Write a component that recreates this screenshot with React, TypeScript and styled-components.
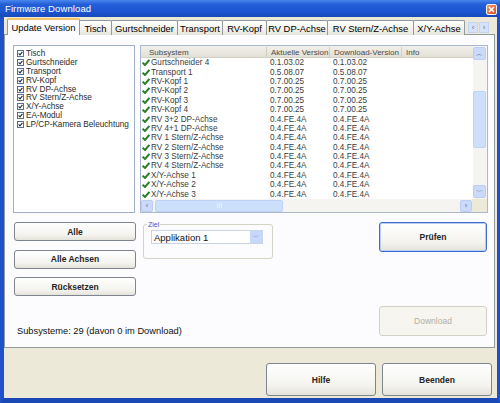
import React from "react";
import styled, { createGlobalStyle } from "styled-components";

const GlobalStyle = createGlobalStyle`
  html, body { margin: 0; padding: 0; background: #ffffff; }
  body { font-family: "Liberation Sans", Arial, sans-serif; }
  * { box-sizing: border-box; }
`;

const tabs = [
  { label: "Update Version", width: 73 },
  { label: "Tisch", width: 33 },
  { label: "Gurtschneider", width: 67 },
  { label: "Transport", width: 46 },
  { label: "RV-Kopf", width: 45 },
  { label: "RV DP-Achse", width: 62 },
  { label: "RV Stern/Z-Achse", width: 87 },
  { label: "X/Y-Achse", width: 52 },
];

const subsystems = [
  "Tisch",
  "Gurtschneider",
  "Transport",
  "RV-Kopf",
  "RV DP-Achse",
  "RV Stern/Z-Achse",
  "X/Y-Achse",
  "EA-Modul",
  "LP/CP-Kamera Beleuchtung",
];

const rows = [
  ["Gurtschneider 4", "0.1.03.02", "0.1.03.02"],
  ["Transport 1", "0.5.08.07", "0.5.08.07"],
  ["RV-Kopf 1", "0.7.00.25", "0.7.00.25"],
  ["RV-Kopf 2", "0.7.00.25", "0.7.00.25"],
  ["RV-Kopf 3", "0.7.00.25", "0.7.00.25"],
  ["RV-Kopf 4", "0.7.00.25", "0.7.00.25"],
  ["RV 3+2 DP-Achse", "0.4.FE.4A", "0.4.FE.4A"],
  ["RV 4+1 DP-Achse", "0.4.FE.4A", "0.4.FE.4A"],
  ["RV 1 Stern/Z-Achse", "0.4.FE.4A", "0.4.FE.4A"],
  ["RV 2 Stern/Z-Achse", "0.4.FE.4A", "0.4.FE.4A"],
  ["RV 3 Stern/Z-Achse", "0.4.FE.4A", "0.4.FE.4A"],
  ["RV 4 Stern/Z-Achse", "0.4.FE.4A", "0.4.FE.4A"],
  ["X/Y-Achse 1", "0.4.FE.4A", "0.4.FE.4A"],
  ["X/Y-Achse 2", "0.4.FE.4A", "0.4.FE.4A"],
  ["X/Y-Achse 3", "0.4.FE.4A", "0.4.FE.4A"],
];

const Window = styled.div`
  width: 500px;
  height: 403px;
  display: flex;
  flex-direction: column;
  overflow: hidden;
`;

const TitleBar = styled.div`
  height: 17px;
  flex: none;
  display: flex;
  align-items: center;
  justify-content: space-between;
  padding: 0 3px 0 5px;
  background: linear-gradient(#4a86ee 0%, #2360d8 25%, #1b55d0 70%, #1849b8 100%);
`;

const Title = styled.span`
  color: #ffffff;
  font-size: 9.5px;
  letter-spacing: 0.1px;
`;

const CloseButton = styled.div`
  width: 11px;
  height: 11px;
  margin-top: 2px;
  border: 1px solid #f4f4f4;
  border-radius: 2px;
  background: linear-gradient(135deg, #f09a6e, #dc4a1e);
  display: flex;
  align-items: center;
  justify-content: center;
`;

const Frame = styled.div`
  flex: 1;
  display: flex;
  flex-direction: column;
  background: #ece9d8;
  border-left: 4px solid #1f52c9;
  border-right: 3px solid #1f52c9;
  border-bottom: 5px solid #1a48b4;
  padding-top: 1px;
`;

const TabStrip = styled.div`
  height: 17px;
  display: flex;
  align-items: flex-end;
  padding-left: 3px;
  margin-bottom: -1px;
`;

const Tab = styled.div<{ $w: number; $active?: boolean }>`
  width: ${(p) => p.$w}px;
  height: ${(p) => (p.$active ? 17 : 15)}px;
  display: flex;
  align-items: center;
  justify-content: center;
  font-size: 9.4px;
  color: #000000;
  white-space: nowrap;
  border: 1px solid #919b9c;
  border-bottom: none;
  border-radius: 2px 2px 0 0;
  margin-left: -1px;
  background: ${(p) =>
    p.$active ? "#fcfcfe" : "linear-gradient(#ffffff, #f0efe8 70%, #e4e3dc)"};
  border-top: ${(p) => (p.$active ? "2px solid #f2c568" : "1px solid #919b9c")};
  position: relative;
  z-index: ${(p) => (p.$active ? 1 : 0)};
  &:first-child {
    margin-left: 0;
  }
`;

const TabArrows = styled.div`
  display: flex;
  gap: 1px;
  margin-left: 3px;
  margin-bottom: 2px;
`;

const TabArrow = styled.div`
  width: 10px;
  height: 11px;
  background: #d6e2fb;
  border: 1px solid #c3d3f5;
  color: #5a6f9e;
  font-size: 8px;
  line-height: 9px;
  text-align: center;
`;

const TabPanel = styled.div`
  height: 314px;
  margin-right: 2px;
  display: flex;
  flex-direction: column;
  background: #fcfcfe;
  border: 1px solid #919b9c;
  padding: 10px 6px 11px 8px;
`;

const TopRow = styled.div`
  height: 168px;
  display: flex;
  gap: 5px;
`;

const ListBox = styled.div`
  width: 122px;
  border: 1px solid #9fb0c8;
  background: #ffffff;
  padding: 3px 0 0 3px;
`;

const ListItem = styled.div`
  height: 8.9px;
  display: flex;
  align-items: center;
  gap: 2px;
  font-size: 8.2px;
  color: #2a2a2a;
  white-space: nowrap;
`;

const Grid = styled.div`
  flex: 1;
  display: flex;
  flex-direction: column;
  border: 1px solid #a9b8cc;
  background: #ffffff;
`;

const GridMain = styled.div`
  flex: 1;
  min-height: 0;
  display: flex;
`;

const GridBody = styled.div`
  flex: 1;
  overflow: hidden;
`;

const cols = "125px 63px 72px 1fr";

const HeaderRow = styled.div`
  height: 12px;
  display: grid;
  grid-template-columns: ${cols};
  background: linear-gradient(#f1f0ea, #e2e0d6);
  border-bottom: 1px solid #d5d2c5;
`;

const HeaderCell = styled.div<{ $first?: boolean }>`
  font-size: 8px;
  color: #4a4a4a;
  line-height: 11px;
  padding-left: ${(p) => (p.$first ? 8 : 4)}px;
  border-left: ${(p) => (p.$first ? "none" : "1px solid #d2cfc0")};
  margin: 1px 0;
  white-space: nowrap;
`;

const Row = styled.div`
  height: 9.4px;
  display: grid;
  grid-template-columns: ${cols};
  align-items: center;
  font-size: 8.2px;
  color: #3c3c3c;
  white-space: nowrap;
`;

const NameCell = styled.div`
  display: flex;
  align-items: center;
  gap: 1px;
  padding-left: 1px;
`;

const Cell = styled.div`
  padding-left: 4px;
`;

const VScroll = styled.div`
  width: 14px;
  display: flex;
  flex-direction: column;
  background: #f5f4f0;
  padding: 1px 0;
`;

const ScrollButton = styled.div<{ $h?: number; $w?: number }>`
  width: ${(p) => p.$w ?? 13}px;
  height: ${(p) => p.$h ?? 13}px;
  flex: none;
  border-radius: 2px;
  background: #cbdaf9;
  border: 1px solid #bccdf3;
  color: #50658f;
  font-size: 7px;
  display: flex;
  align-items: center;
  justify-content: center;
`;

const VThumb = styled.div`
  height: 57px;
  width: 13px;
  margin-top: 31px;
  border-radius: 2px;
  background: #cde0fb;
  border: 1px solid #bdd2f5;
`;

const Spacer = styled.div`
  flex: 1;
`;

const HScrollRow = styled.div`
  height: 13px;
  display: flex;
  background: #f5f4f0;
  align-items: center;
`;

const HThumb = styled.div`
  width: 128px;
  height: 12px;
  margin-left: 2px;
  border-radius: 2px;
  background: #cde0fb;
  border: 1px solid #bdd2f5;
  display: flex;
  align-items: center;
  justify-content: center;
  gap: 1px;
`;

const Grip = styled.span`
  width: 1px;
  height: 5px;
  background: #e8f0fe;
`;

const Corner = styled.div`
  width: 15px;
  height: 13px;
  background: #ece9d8;
`;

const MidRow = styled.div`
  margin-top: 9px;
  display: flex;
  align-items: flex-start;
`;

const ButtonColumn = styled.div`
  width: 122px;
  margin-left: 1px;
  display: flex;
  flex-direction: column;
  gap: 8.5px;
`;

const Button = styled.div<{ $w?: number; $h?: number; $default?: boolean; $disabled?: boolean }>`
  width: ${(p) => (p.$w ? `${p.$w}px` : "100%")};
  height: ${(p) => p.$h ?? 19}px;
  flex: none;
  display: flex;
  align-items: center;
  justify-content: center;
  font-size: 8.5px;
  font-weight: ${(p) => (p.$disabled ? "normal" : "bold")};
  color: ${(p) => (p.$disabled ? "#b3b0a2" : "#262626")};
  border-radius: 3px;
  border: 1px solid
    ${(p) => (p.$default ? "#3d6ccf" : p.$disabled ? "#d3d1c6" : "#7c8590")};
  box-shadow: ${(p) => (p.$default ? "inset 0 0 0 1px #b8cdf2" : "none")};
  background: ${(p) =>
    p.$disabled ? "#f6f5ef" : "linear-gradient(#ffffff, #f4f3ee 70%, #e4e2da)"};
`;

const Fieldset = styled.fieldset`
  width: 130px;
  height: 38px;
  margin: -1px 0 0 7px;
  padding: 0 0 0 7px;
  border: 1px solid #d5d2c6;
  border-radius: 3px;
`;

const Legend = styled.legend`
  font-size: 7px;
  color: #2c5ad0;
  padding: 0 1px;
  margin-left: -4px;
`;

const Select = styled.div`
  width: 112px;
  height: 14px;
  margin-top: 2px;
  display: flex;
  align-items: center;
  background: #ffffff;
  border: 1px solid #c9d4e6;
  font-size: 9.5px;
  color: #111111;
  padding-left: 2px;
`;

const SelectText = styled.span`
  flex: 1;
`;

const SelectArrow = styled.div`
  width: 12px;
  height: 12px;
  background: #c8d8fa;
  color: #4b5f8c;
  font-size: 6px;
  display: flex;
  align-items: center;
  justify-content: center;
`;

const RightButtons = styled.div`
  margin-left: auto;
  margin-right: 1px;
`;

const BottomRow = styled.div`
  margin-top: auto;
  display: flex;
  align-items: flex-end;
  justify-content: space-between;
`;

const Status = styled.div`
  margin-left: 4px;
  font-size: 9.3px;
  line-height: 10px;
  color: #111111;
`;

const Footer = styled.div`
  flex: 1;
  display: flex;
  justify-content: flex-end;
  align-items: flex-end;
  gap: 6px;
  padding: 0 5px 2px 0;
`;

const Check = () => (
  <svg width="8" height="7" viewBox="0 0 8 7">
    <path d="M0.6 3.6 L3 6 L7.4 0.8" stroke="#2a7f2a" strokeWidth="2" fill="none" />
  </svg>
);

const CheckBox = () => (
  <svg width="7" height="7" viewBox="0 0 7 7">
    <rect x="0.5" y="0.5" width="6" height="6" fill="#ffffff" stroke="#56708f" />
    <path d="M1.6 3.4 L3 4.9 L5.4 1.9" stroke="#1e2e3e" strokeWidth="1.1" fill="none" />
  </svg>
);

export default function App() {
  return (
    <>
      <GlobalStyle />
      <Window>
        <TitleBar>
          <Title>Firmware Download</Title>
          <CloseButton>
            <svg width="7" height="7" viewBox="0 0 7 7">
              <path d="M1 1 L6 6 M6 1 L1 6" stroke="#ffffff" strokeWidth="1.5" />
            </svg>
          </CloseButton>
        </TitleBar>
        <Frame>
          <TabStrip>
            {tabs.map((t, i) => (
              <Tab key={t.label} $w={t.width} $active={i === 0}>
                {t.label}
              </Tab>
            ))}
            <TabArrows>
              <TabArrow>‹</TabArrow>
              <TabArrow>›</TabArrow>
            </TabArrows>
          </TabStrip>
          <TabPanel>
            <TopRow>
              <ListBox>
                {subsystems.map((s) => (
                  <ListItem key={s}>
                    <CheckBox />
                    {s}
                  </ListItem>
                ))}
              </ListBox>
              <Grid>
                <GridMain>
                  <GridBody>
                    <HeaderRow>
                      <HeaderCell $first>Subsystem</HeaderCell>
                      <HeaderCell>Aktuelle Version</HeaderCell>
                      <HeaderCell>Download-Version</HeaderCell>
                      <HeaderCell>Info</HeaderCell>
                    </HeaderRow>
                    {rows.map((r) => (
                      <Row key={r[0]}>
                        <NameCell>
                          <Check />
                          {r[0]}
                        </NameCell>
                        <Cell>{r[1]}</Cell>
                        <Cell>{r[2]}</Cell>
                        <Cell />
                      </Row>
                    ))}
                  </GridBody>
                  <VScroll>
                    <ScrollButton>︿</ScrollButton>
                    <VThumb />
                    <Spacer />
                    <ScrollButton>﹀</ScrollButton>
                  </VScroll>
                </GridMain>
                <HScrollRow>
                  <ScrollButton $w={12} $h={12}>‹</ScrollButton>
                  <HThumb>
                    <Grip />
                    <Grip />
                    <Grip />
                  </HThumb>
                  <Spacer />
                  <ScrollButton $w={12} $h={12}>›</ScrollButton>
                  <Corner />
                </HScrollRow>
              </Grid>
            </TopRow>
            <MidRow>
              <ButtonColumn>
                <Button>Alle</Button>
                <Button>Alle Achsen</Button>
                <Button>Rücksetzen</Button>
              </ButtonColumn>
              <Fieldset>
                <Legend>Ziel</Legend>
                <Select>
                  <SelectText>Applikation 1</SelectText>
                  <SelectArrow>﹀</SelectArrow>
                </Select>
              </Fieldset>
              <RightButtons>
                <Button $w={108} $h={30} $default>
                  Prüfen
                </Button>
              </RightButtons>
            </MidRow>
            <BottomRow>
              <Status>Subsysteme: 29 (davon 0 im Download)</Status>
              <RightButtons>
                <Button $w={108} $h={30} $disabled>
                  Download
                </Button>
              </RightButtons>
            </BottomRow>
          </TabPanel>
          <Footer>
            <Button $w={110} $h={33}>
              Hilfe
            </Button>
            <Button $w={110} $h={33}>
              Beenden
            </Button>
          </Footer>
        </Frame>
      </Window>
    </>
  );
}
